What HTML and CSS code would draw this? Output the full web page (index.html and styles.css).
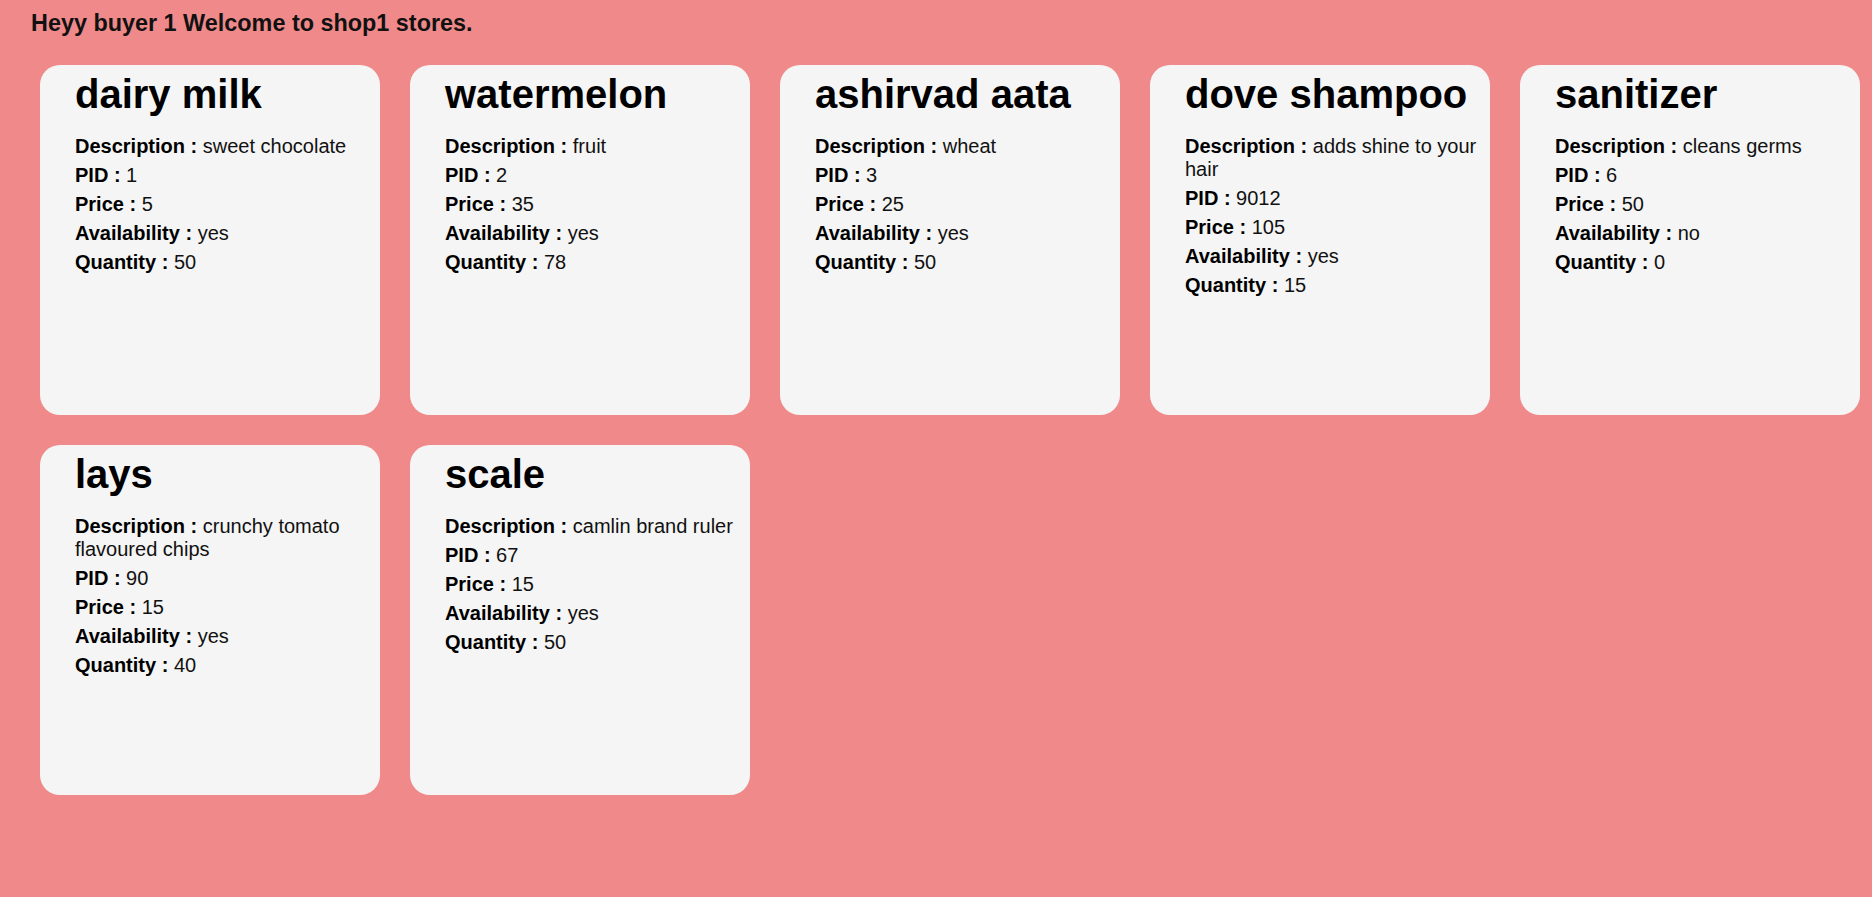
FILE: index.html
```html
<!DOCTYPE html>
<html lang="en">
<head>
<meta charset="utf-8">
<title>shop1 stores</title>
<link rel="stylesheet" href="styles.css">
</head>
<body>
<h3 class="welcome">Heyy buyer 1 Welcome to shop1 stores.</h3>
<div class="products">
  <div class="card">
    <h1 class="name">dairy milk</h1>
    <p class="row"><b>Description :</b> sweet chocolate</p>
    <p class="row"><b>PID :</b> 1</p>
    <p class="row"><b>Price :</b> 5</p>
    <p class="row"><b>Availability :</b> yes</p>
    <p class="row"><b>Quantity :</b> 50</p>
  </div>
  <div class="card">
    <h1 class="name">watermelon</h1>
    <p class="row"><b>Description :</b> fruit</p>
    <p class="row"><b>PID :</b> 2</p>
    <p class="row"><b>Price :</b> 35</p>
    <p class="row"><b>Availability :</b> yes</p>
    <p class="row"><b>Quantity :</b> 78</p>
  </div>
  <div class="card">
    <h1 class="name">ashirvad aata</h1>
    <p class="row"><b>Description :</b> wheat</p>
    <p class="row"><b>PID :</b> 3</p>
    <p class="row"><b>Price :</b> 25</p>
    <p class="row"><b>Availability :</b> yes</p>
    <p class="row"><b>Quantity :</b> 50</p>
  </div>
  <div class="card">
    <h1 class="name">dove shampoo</h1>
    <p class="row"><b>Description :</b> adds shine to your hair</p>
    <p class="row"><b>PID :</b> 9012</p>
    <p class="row"><b>Price :</b> 105</p>
    <p class="row"><b>Availability :</b> yes</p>
    <p class="row"><b>Quantity :</b> 15</p>
  </div>
  <div class="card">
    <h1 class="name">sanitizer</h1>
    <p class="row"><b>Description :</b> cleans germs</p>
    <p class="row"><b>PID :</b> 6</p>
    <p class="row"><b>Price :</b> 50</p>
    <p class="row"><b>Availability :</b> no</p>
    <p class="row"><b>Quantity :</b> 0</p>
  </div>
  <div class="card">
    <h1 class="name">lays</h1>
    <p class="row"><b>Description :</b> crunchy tomato flavoured chips</p>
    <p class="row"><b>PID :</b> 90</p>
    <p class="row"><b>Price :</b> 15</p>
    <p class="row"><b>Availability :</b> yes</p>
    <p class="row"><b>Quantity :</b> 40</p>
  </div>
  <div class="card">
    <h1 class="name">scale</h1>
    <p class="row"><b>Description :</b> camlin brand ruler</p>
    <p class="row"><b>PID :</b> 67</p>
    <p class="row"><b>Price :</b> 15</p>
    <p class="row"><b>Availability :</b> yes</p>
    <p class="row"><b>Quantity :</b> 50</p>
  </div>
</div>
</body>
</html>
```
FILE: styles.css
```css
html, body {
  margin: 0;
  padding: 0;
  background: #f08a8a;
  min-height: 100%;
}

body {
  font-family: "Liberation Sans", Arial, sans-serif;
  color: #000;
  padding: 10px 0 0 0;
}

.welcome {
  margin: 0 0 28px 31px;
  font-size: 23.4px;
  font-weight: bold;
  line-height: normal;
  color: #111;
}

.products {
  display: flex;
  flex-wrap: wrap;
  gap: 30px;
  padding-left: 40px;
}

.card {
  width: 340px;
  height: 350px;
  box-sizing: border-box;
  background: #f5f5f5;
  border-radius: 20px;
  padding: 7px 10px 6px 35px;
}

.name {
  margin: 0 0 18px 0;
  font-size: 40px;
  font-weight: bold;
  line-height: normal;
}

.row {
  margin: 0 0 6px 0;
  font-size: 20px;
  line-height: normal;
  color: #111;
}

.row b {
  color: #000;
}
```
